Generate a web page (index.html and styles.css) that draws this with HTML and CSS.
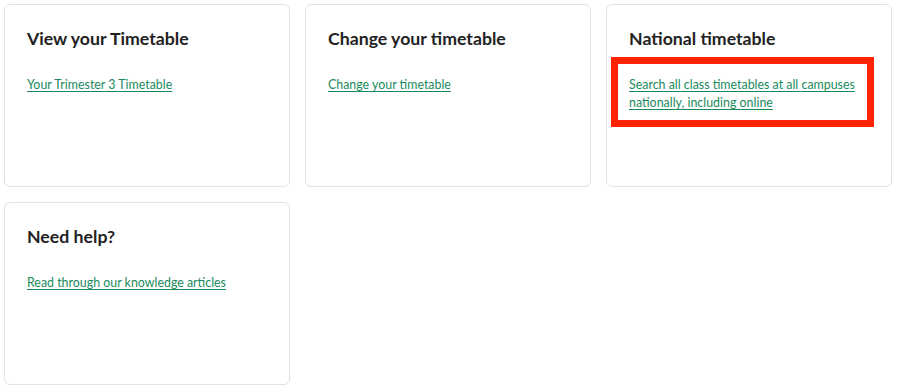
FILE: index.html
```html
<!DOCTYPE html>
<html lang="en">
<head>
  <meta charset="UTF-8">
  <meta name="viewport" content="width=device-width, initial-scale=1.0">
  <title>Timetables</title>
  <link rel="stylesheet" href="styles.css">
</head>
<body>
  <div class="card-grid">
    <div class="card">
      <h2 class="card-title">View your Timetable</h2>
      <a class="card-link" href="#">Your Trimester 3 Timetable</a>
    </div>
    <div class="card">
      <h2 class="card-title">Change your timetable</h2>
      <a class="card-link" href="#">Change your timetable</a>
    </div>
    <div class="card">
      <h2 class="card-title">National timetable</h2>
      <a class="card-link" href="#">Search all class timetables at all campuses nationally, including online</a>
      <div class="highlight-box"></div>
    </div>
    <div class="card">
      <h2 class="card-title">Need help?</h2>
      <a class="card-link" href="#">Read through our knowledge articles</a>
    </div>
  </div>
</body>
</html>
```

FILE: styles.css
```css
body {
  margin: 0;
  padding: 4px;
  background-color: #fff;
  font-family: Lato, "Noto Sans", sans-serif;
  color: #222;
}

.card-grid {
  display: grid;
  grid-template-columns: repeat(3, 286px);
  grid-auto-rows: 183px;
  gap: 15px;
}

.card {
  position: relative;
  box-sizing: border-box;
  border: 1px solid #e2e2e2;
  border-radius: 6px;
  padding: 22px 22px;
}

.card-title {
  margin: 0 0 25px;
  font-size: 17.7px;
  line-height: 24px;
  font-weight: 700;
  color: #222;
}

.card-link {
  display: block;
  font-size: 12.4px;
  line-height: 18px;
  color: #1a8a5c;
  text-decoration: underline;
  text-underline-offset: 2px;
}

.highlight-box {
  position: absolute;
  top: 52px;
  left: 4px;
  width: 263px;
  height: 70px;
  box-sizing: border-box;
  border: 7px solid #ff2400;
}
```
